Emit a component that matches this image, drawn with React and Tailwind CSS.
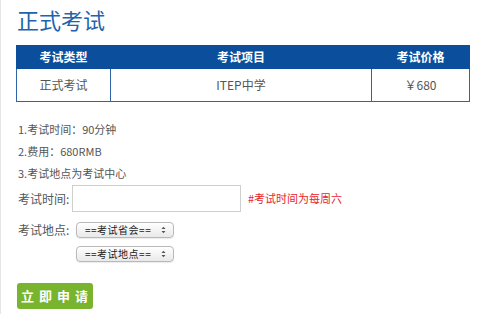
const font = { fontFamily: '"Noto Sans CJK SC", "Noto Sans", sans-serif' }

const SelectBox = ({ label }) => (
  <div className="flex items-center justify-between w-[98px] h-[16px] pl-[8px] pr-[7px] rounded-[4px] border border-[#b9b9b9] bg-gradient-to-b from-white to-[#e9e9e9] shadow-[0_1px_1px_rgba(0,0,0,0.08)] text-[10px] leading-none text-[#222] tracking-[0.5px]">
    <span>{label}</span>
    <svg width="5" height="8" viewBox="0 0 5 8" className="text-[#555]">
      <path d="M0.5 3L2.5 0.8L4.5 3Z" fill="currentColor" />
      <path d="M0.5 5L2.5 7.2L4.5 5Z" fill="currentColor" />
    </svg>
  </div>
)

const App = () => {
  return (
    <div className="w-[501px] h-[314px] bg-white border-l border-[#e6e6e6] pl-[15px] overflow-hidden" style={font}>
      <h1 className="pt-[5px] text-[22px] leading-[28px] text-[#1d63ad] pl-[1px]">正式考试</h1>

      <table className="mt-[12px] w-[454px] border-collapse text-[12px] text-center">
        <thead>
          <tr className="h-[23px] bg-[#0b4f9c] text-white font-bold">
            <th className="w-[94px] border border-[#0b4f9c] font-bold">考试类型</th>
            <th className="w-[261px] border border-[#0b4f9c] font-bold">考试项目</th>
            <th className="border border-[#0b4f9c] font-bold">考试价格</th>
          </tr>
        </thead>
        <tbody>
          <tr className="h-[33px] text-[#555]">
            <td className="border border-[#2f65a6]">正式考试</td>
            <td className="border border-[#2f65a6]">ITEP中学</td>
            <td className="border border-[#2f65a6]">￥680</td>
          </tr>
        </tbody>
      </table>

      <div className="mt-[16px] pl-[2px] text-[11px] leading-[22px] text-[#555]">
        <p>1.考试时间：90分钟</p>
        <p>2.费用：680RMB</p>
        <p>3.考试地点为考试中心</p>
      </div>

      <div className="mt-[1px] flex items-center pl-[2px]">
        <span className="w-[54px] text-[12px] text-[#555]">考试时间:</span>
        <div className="w-[169px] h-[27px] border border-[#cfcfcf] bg-white"></div>
        <span className="ml-[7px] text-[11px] text-[#e8262b]">#考试时间为每周六</span>
      </div>

      <div className="mt-[9px] flex items-center pl-[2px]">
        <span className="w-[58px] text-[12px] text-[#555]">考试地点:</span>
        <SelectBox label="==考试省会==" />
      </div>
      <div className="mt-[7px] pl-[60px]">
        <SelectBox label="==考试地点==" />
      </div>

      <button className="mt-[21px] ml-[1px] w-[76px] h-[26px] rounded-[3px] bg-[#78b42d] text-white text-[13px] font-bold tracking-[5px] pl-[4px] block">
        立即申请
      </button>
    </div>
  )
}

export default App
